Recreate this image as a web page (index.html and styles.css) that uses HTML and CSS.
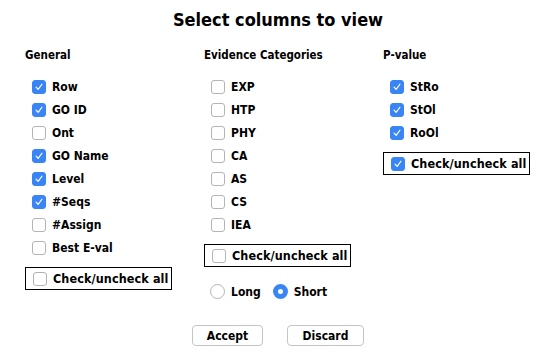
FILE: index.html
```html
<!DOCTYPE html>
<html lang="en">
<head>
  <meta charset="UTF-8" />
  <meta name="viewport" content="width=device-width, initial-scale=1" />
  <title>Select columns to view</title>
  <link rel="stylesheet" href="styles.css">
</head>
<body>
  <div class="dialog">
    <h1>Select columns to view</h1>

    <div class="columns">
      <div class="group">
        <h2>General</h2>
        <div class="opts">
          <label class="opt"><span class="box on"><svg viewBox="0 0 14 14"><path d="M3.6 7.2 L6 9.8 L10.4 3.8" /></svg></span>Row</label>
          <label class="opt"><span class="box on"><svg viewBox="0 0 14 14"><path d="M3.6 7.2 L6 9.8 L10.4 3.8" /></svg></span>GO ID</label>
          <label class="opt"><span class="box"></span>Ont</label>
          <label class="opt"><span class="box on"><svg viewBox="0 0 14 14"><path d="M3.6 7.2 L6 9.8 L10.4 3.8" /></svg></span>GO Name</label>
          <label class="opt"><span class="box on"><svg viewBox="0 0 14 14"><path d="M3.6 7.2 L6 9.8 L10.4 3.8" /></svg></span>Level</label>
          <label class="opt"><span class="box on"><svg viewBox="0 0 14 14"><path d="M3.6 7.2 L6 9.8 L10.4 3.8" /></svg></span>#Seqs</label>
          <label class="opt"><span class="box"></span>#Assign</label>
          <label class="opt"><span class="box"></span>Best E-val</label>
        </div>
        <label class="all"><span class="box"></span>Check/uncheck all</label>
      </div>

      <div class="group">
        <h2>Evidence Categories</h2>
        <div class="opts">
          <label class="opt"><span class="box"></span>EXP</label>
          <label class="opt"><span class="box"></span>HTP</label>
          <label class="opt"><span class="box"></span>PHY</label>
          <label class="opt"><span class="box"></span>CA</label>
          <label class="opt"><span class="box"></span>AS</label>
          <label class="opt"><span class="box"></span>CS</label>
          <label class="opt"><span class="box"></span>IEA</label>
        </div>
        <label class="all"><span class="box"></span>Check/uncheck all</label>
        <div class="radios">
          <label class="radio"><span class="dot"></span>Long</label>
          <label class="radio"><span class="dot on"></span>Short</label>
        </div>
      </div>

      <div class="group">
        <h2>P-value</h2>
        <div class="opts">
          <label class="opt"><span class="box on"><svg viewBox="0 0 14 14"><path d="M3.6 7.2 L6 9.8 L10.4 3.8" /></svg></span>StRo</label>
          <label class="opt"><span class="box on"><svg viewBox="0 0 14 14"><path d="M3.6 7.2 L6 9.8 L10.4 3.8" /></svg></span>StOl</label>
          <label class="opt"><span class="box on"><svg viewBox="0 0 14 14"><path d="M3.6 7.2 L6 9.8 L10.4 3.8" /></svg></span>RoOl</label>
        </div>
        <label class="all"><span class="box on"><svg viewBox="0 0 14 14"><path d="M3.6 7.2 L6 9.8 L10.4 3.8" /></svg></span>Check/uncheck all</label>
      </div>
    </div>

    <div class="buttons">
      <button class="btn accept">Accept</button>
      <button class="btn discard">Discard</button>
    </div>
  </div>
</body>
</html>
```

FILE: styles.css
```css
body {
  margin: 0;
  background: #fff;
  color: #000;
  font-family: "DejaVu Sans Condensed", "DejaVu Sans", sans-serif;
  font-stretch: condensed;
}

.dialog {
  padding-top: 8px;
}

h1 {
  margin: 0;
  font-size: 18px;
  line-height: 24px;
  font-weight: bold;
  text-align: center;
}

.columns {
  display: grid;
  grid-template-columns: 179px 179px 1fr;
  padding-left: 25px;
  margin-top: 15px;
}

h2 {
  margin: 0;
  font-size: 11.5px;
  line-height: 16px;
  font-weight: bold;
}

.opts {
  margin-top: 12px;
  display: flex;
  flex-direction: column;
}

.opt {
  display: flex;
  align-items: center;
  gap: 6px;
  height: 23px;
  padding-left: 7px;
  font-size: 12px;
  font-weight: bold;
}

.box {
  box-sizing: border-box;
  width: 14px;
  height: 14px;
  border: 1px solid #b4b4b4;
  border-radius: 3px;
  background: #fff;
  flex: none;
}

.box.on {
  border-color: #3a85f5;
  background: #3a85f5;
}

.box svg {
  display: block;
  width: 12px;
  height: 12px;
  fill: none;
  stroke: #fff;
  stroke-width: 1.4;
  stroke-linecap: round;
  stroke-linejoin: round;
}

.all {
  box-sizing: border-box;
  display: flex;
  align-items: center;
  gap: 6px;
  width: 147px;
  height: 23px;
  margin-top: 8px;
  padding-left: 7px;
  border: 1px solid #000;
  font-size: 12.5px;
  font-weight: bold;
  letter-spacing: 0.1px;
}

.radios {
  display: flex;
  align-items: center;
  gap: 12px;
  height: 23px;
  margin-top: 13px;
  padding-left: 6px;
}

.radio {
  display: flex;
  align-items: center;
  gap: 6px;
  font-size: 12px;
  font-weight: bold;
}

.dot {
  box-sizing: border-box;
  width: 15px;
  height: 15px;
  border: 1px solid #b4b4b4;
  border-radius: 50%;
  background: #fff;
}

.dot.on {
  border: 5px solid #3a85f5;
}

.buttons {
  display: flex;
  justify-content: center;
  gap: 24px;
  margin-top: 22px;
}

.btn {
  box-sizing: border-box;
  height: 21px;
  padding: 0;
  border: 1px solid #c4c4c4;
  border-radius: 4px;
  background: #fff;
  color: #000;
  font-family: inherit;
  font-stretch: condensed;
  font-size: 12px;
  font-weight: bold;
}

.accept { width: 71px; }
.discard { width: 77px; }
```
